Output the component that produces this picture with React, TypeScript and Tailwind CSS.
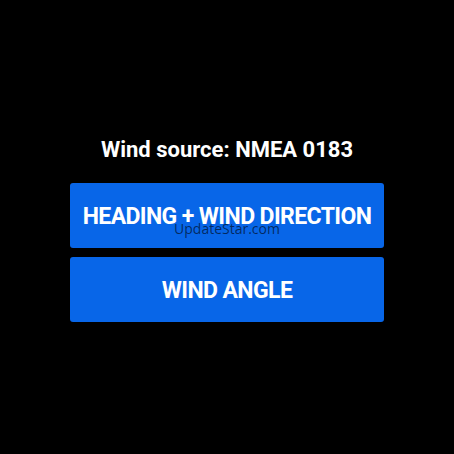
import React from "react";

export default function App() {
  return (
    <div className="w-[454px] h-[454px] bg-black flex flex-col items-center justify-center relative" style={{ fontFamily: "Roboto, sans-serif" }}>
      <div className="text-white font-bold text-[22px] leading-none mb-[22px] mt-[6px]">Wind source: NMEA 0183</div>
      <div className="flex flex-col gap-[9px] w-[314px]">
        <button className="h-[65px] pt-[3px] rounded-[3px] bg-[#0866e8] text-white font-bold text-[23px] leading-none tracking-[-0.6px]">HEADING + WIND DIRECTION</button>
        <button className="h-[65px] pt-[3px] rounded-[3px] bg-[#0866e8] text-white font-bold text-[23px] leading-none tracking-[-0.6px]">WIND ANGLE</button>
      </div>
      <div className="absolute left-0 right-0 top-[218px] text-center text-[14px] text-black/60" style={{ fontFamily: "'Open Sans', sans-serif" }}>UpdateStar.com</div>
    </div>
  );
}
